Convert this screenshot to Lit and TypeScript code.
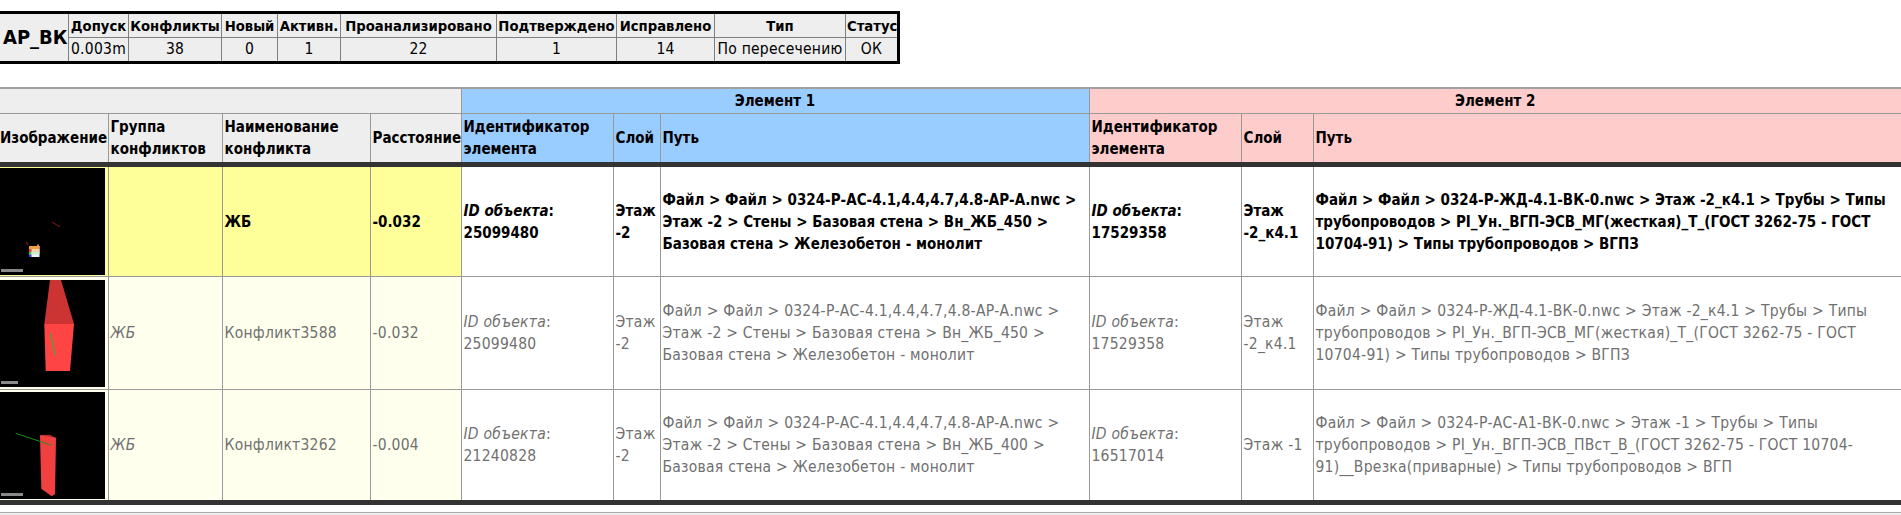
import { LitElement, html, css, svg, unsafeCSS } from "lit";
import { customElement } from "lit/decorators.js";

const FONT = unsafeCSS(`"DejaVu Sans Condensed", "Noto Sans", "Liberation Sans", sans-serif`);

interface Row {
  cls: string;
  img: unknown;
  group: string;
  name: string;
  dist: string;
  id1: string;
  layer1: string;
  path1: string;
  id2: string;
  layer2: string;
  path2: string;
}

const scale = (w: number) => svg`<rect x="1" y="101" width="${w}" height="3" fill="#8a8a8a"/>`;

const img1 = svg`
  <line x1="52" y1="54" x2="60" y2="59" stroke="#8a1a1a" stroke-width="1"/>
  <line x1="26.7" y1="74" x2="27.5" y2="77" stroke="#8a1a1a" stroke-width="1.2"/>
  <rect x="29" y="78" width="10.5" height="11" fill="#eef"/>
  <rect x="29" y="78" width="10.5" height="3" fill="#f0a040"/>
  <rect x="29" y="81" width="10.5" height="3" fill="#f5d0b0"/>
  <rect x="29" y="81" width="2.5" height="3" fill="#e04040"/>
  <rect x="29" y="84" width="2.5" height="2.5" fill="#30d040"/>
  <rect x="31.5" y="84" width="8" height="2.5" fill="#c8f0c8"/>
  <rect x="29" y="86.5" width="2.5" height="2.5" fill="#3040e0"/>
  <rect x="37" y="76.5" width="2" height="1.5" fill="#e08020"/>
  ${scale(22)}`;

const img2 = svg`
  <polygon points="50,0 61,0 74,44 44.3,44" fill="#cc3333"/>
  <polygon points="44.3,44 74,44 70,91 45.7,91" fill="#ff4444"/>
  <line x1="50.7" y1="53.3" x2="55" y2="75.3" stroke="#30b030" stroke-width="1.2"/>
  ${scale(17)}`;

const img3 = svg`
  <polygon points="40,43 50,42.7 56,46 48,46" fill="#a83030"/>
  <polygon points="40,43 56,46 55,102 51.7,104.3 41.3,96.7" fill="#f04040"/>
  <line x1="15.7" y1="41.3" x2="51.7" y2="53.3" stroke="#1f8f1f" stroke-width="1"/>
  ${scale(22)}`;

const P1A = "Файл > Файл > 0324-Р-АС-4.1,4.4,4.7,4.8-АР-А.nwc > Этаж -2 > Стены > Базовая стена > Вн_ЖБ_450 > Базовая стена > Железобетон - монолит";
const P2A = "Файл > Файл > 0324-Р-ЖД-4.1-ВК-0.nwc > Этаж -2_к4.1 > Трубы > Типы трубопроводов > PI_Ун._ВГП-ЭСВ_МГ(жесткая)_Т_(ГОСТ 3262-75 - ГОСТ 10704-91) > Типы трубопроводов > ВГПЗ";

const rows: Row[] = [
  { cls: "active", img: img1, group: "", name: "ЖБ", dist: "-0.032", id1: "25099480", layer1: "Этаж -2", path1: P1A, id2: "17529358", layer2: "Этаж -2_к4.1", path2: P2A },
  { cls: "muted", img: img2, group: "ЖБ", name: "Конфликт3588", dist: "-0.032", id1: "25099480", layer1: "Этаж -2", path1: P1A, id2: "17529358", layer2: "Этаж -2_к4.1", path2: P2A },
  { cls: "muted", img: img3, group: "ЖБ", name: "Конфликт3262", dist: "-0.004", id1: "21240828", layer1: "Этаж -2",
    path1: "Файл > Файл > 0324-Р-АС-4.1,4.4,4.7,4.8-АР-А.nwc > Этаж -2 > Стены > Базовая стена > Вн_ЖБ_400 > Базовая стена > Железобетон - монолит",
    id2: "16517014", layer2: "Этаж -1",
    path2: "Файл > Файл > 0324-Р-АС-А1-ВК-0.nwc > Этаж -1 > Трубы > Типы трубопроводов > PI_Ун._ВГП-ЭСВ_ПВст_В_(ГОСТ 3262-75 - ГОСТ 10704-91)__Врезка(приварные) > Типы трубопроводов > ВГП" },
];

@customElement("app-root")
export class AppRoot extends LitElement {
  static styles = css`
    :host { display: block; font-family: ${FONT}; color: #000; font-size: 15.5px; letter-spacing: 0.25px; }
    table { border-collapse: collapse; table-layout: fixed; }
    .page { padding-top: 11px; height: 515px; box-sizing: border-box; overflow: hidden; position: relative; }

    .summary { width: 900px; border: 3px solid #000; background: #eee; margin-left: -3px; }
    .summary td, .summary th { border: 1px solid #808080; height: 23px; padding: 0 1px; text-align: center; white-space: nowrap; line-height: 23px; overflow: hidden; }
    .summary th { font-weight: bold; font-size: 14.7px; letter-spacing: 0; }
    .summary .name { font-size: 20px; letter-spacing: 0; font-weight: bold; text-align: left; padding-left: 3px; }
    .summary .l { text-align: left; padding-left: 2px; }

    .main { width: 1901px; margin-top: 23px; border-top: 2px solid #a0a0a0; }
    .main th, .main td { border: 1px solid #999; padding: 0 2px; text-align: left; line-height: 22px; vertical-align: middle; }
    .main tr > :first-child { border-left: 0; }
    .main tr > :last-child { border-right: 0; }
    .main th { font-weight: bold; background: #eee; font-size: 15px; letter-spacing: 0; }
    .main .band th { height: 24px; text-align: center; padding: 0; }
    .main .heads th { height: 48px; border-bottom: 5px solid #333; }
    .main th.nw { white-space: nowrap; }
    .main th.blue { background: #9cf; }
    .main th.pink { background: #fcc; }
    .main th.img { padding: 0; text-align: left; }
    .main td.img { padding: 1px 2px 1px 0; height: 107px; line-height: 0; }
    .main tr.muted td.img { padding-top: 2px; }
    .main tr.second td.img { padding-top: 3px; padding-bottom: 2px; }
    .main td.img svg { display: block; width: 105px; height: 107px; background: #000; }
    .main tbody tr:last-child td { border-bottom: 5px solid #333; }
    .main tr.active td { font-weight: bold; color: #000; background: #fff; font-size: 15px; letter-spacing: 0; }
    .main tr.active td.hl { background: #ff9; }
    .main tr.muted td { color: #707070; background: #fff; }
    .main tr.muted td.hl { background: #ffe; }
    .group { font-style: italic; }
    .idl { font-style: italic; }
    .rule { position: absolute; left: 0; right: 0; top: 512px; height: 3px; box-sizing: border-box; border-top: 1px solid #aaa; background: #eee; }
  `;

  render() {
    const sumCols = [70, 60, 93, 56, 63, 156, 120, 98, 131, 53];
    const cols = [108, 114, 148, 91, 152, 47, 429, 152, 72, 588];
    return html`<div class="page">
      <table class="summary">
        <colgroup>${sumCols.map((w) => html`<col style="width:${w}px" />`)}</colgroup>
        <tbody>
          <tr>
            <td class="name" rowspan="2">АР_ВК</td>
            <th>Допуск</th><th>Конфликты</th><th>Новый</th><th>Активн.</th><th>Проанализировано</th><th>Подтверждено</th><th>Исправлено</th><th>Тип</th><th>Статус</th>
          </tr>
          <tr>
            <td class="l">0.003m</td><td>38</td><td>0</td><td>1</td><td>22</td><td>1</td><td>14</td><td>По пересечению</td><td>ОК</td>
          </tr>
        </tbody>
      </table>
      <table class="main">
        <colgroup>${cols.map((w) => html`<col style="width:${w}px" />`)}</colgroup>
        <thead>
          <tr class="band">
            <th colspan="4"></th>
            <th class="blue" colspan="3">Элемент 1</th>
            <th class="pink" colspan="3">Элемент 2</th>
          </tr>
          <tr class="heads">
            <th class="img nw">Изображение</th><th>Группа конфликтов</th><th>Наименование конфликта</th><th class="nw">Расстояние</th>
            <th class="blue">Идентификатор элемента</th><th class="blue">Слой</th><th class="blue">Путь</th>
            <th class="pink">Идентификатор элемента</th><th class="pink">Слой</th><th class="pink">Путь</th>
          </tr>
        </thead>
        <tbody>
          ${rows.map(
            (r, i) => html`<tr class="${r.cls} ${i === 1 ? "second" : ""}">
              <td class="img hl"><svg viewBox="0 0 105 107">${r.img}</svg></td>
              <td class="hl group">${r.group}</td>
              <td class="hl">${r.name}</td>
              <td class="hl">${r.dist}</td>
              <td><span class="idl">ID объекта</span>: ${r.id1}</td>
              <td>${r.layer1}</td>
              <td>${r.path1}</td>
              <td><span class="idl">ID объекта</span>: ${r.id2}</td>
              <td>${r.layer2}</td>
              <td>${r.path2}</td>
            </tr>`
          )}
        </tbody>
      </table>
      <div class="rule"></div>
    </div>`;
  }
}
